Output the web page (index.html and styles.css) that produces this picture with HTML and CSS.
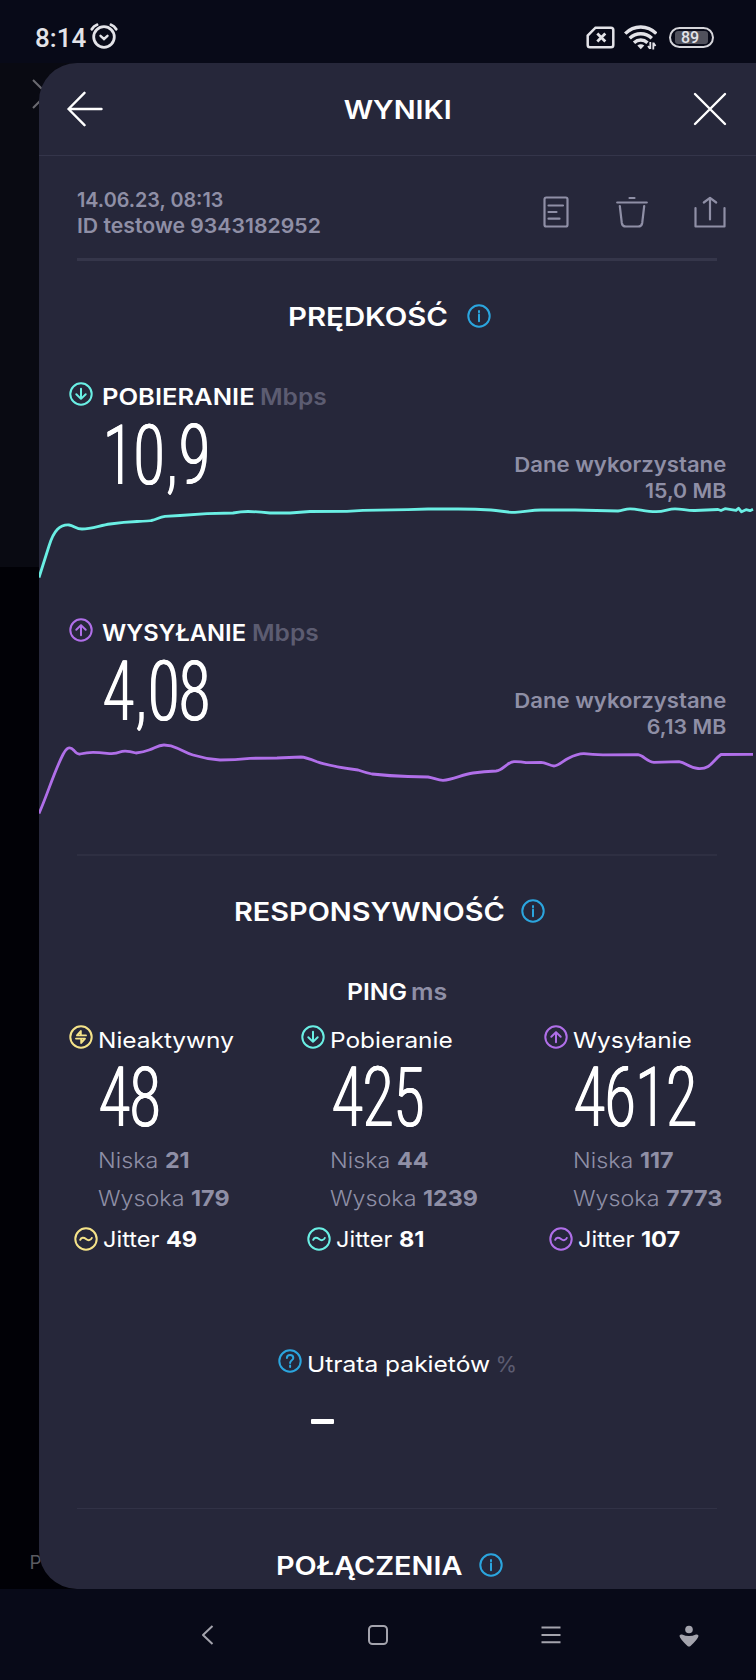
FILE: index.html
```html
<!DOCTYPE html>
<html lang="pl">
<head>
<meta charset="utf-8">
<title>Wyniki</title>
<link rel="stylesheet" href="styles.css">
</head>
<body>
<svg class="defs" width="0" height="0">
  <symbol id="down" viewBox="0 0 24 24"><circle cx="12" cy="12" r="10.700"/><path d="M12 6.800v10M7.300 12.300l4.700 4.600 4.700-4.600"/></symbol>
  <symbol id="up" viewBox="0 0 24 24"><circle cx="12" cy="12" r="10.700"/><path d="M12 17.200v-10M7.300 11.700L12 7.100l4.700 4.600"/></symbol>
  <symbol id="idle" viewBox="0 0 24 24"><circle cx="12" cy="12" r="10.700"/><path d="M17 10.400H8L11.800 6V10M7 13.600h9L12.200 18V14" stroke-width="1.900"/></symbol>
  <symbol id="wave" viewBox="0 0 24 24"><circle cx="12" cy="12" r="10.700"/><path d="M6.200 12.800c1-2.600 3.600-2.600 5.800-.8s4.800 1.500 5.800-1"/></symbol>
  <symbol id="info" viewBox="0 0 24 24"><circle cx="12" cy="12" r="10.700"/><path d="M12 10.500v6.700M12 7v1.300"/></symbol>
  <symbol id="help" viewBox="0 0 24 24"><circle cx="12" cy="12" r="10.700"/><path d="M8.900 9c0-4 6.400-4 6.400 0 0 2.400-3.200 2.200-3.200 5M12.100 16.600v1.400"/></symbol>
</svg>
<div class="phone">
  <header class="status">
    <div class="clock"><span>8:14</span>
      <svg width="28" height="26" viewBox="0 0 28 26" fill="none" stroke="#e3e3e8" stroke-width="2.800" stroke-linecap="round"><circle cx="14" cy="14" r="10.300"/><path d="M10.500 12.800l3.500 3.200 3.500-3.200" stroke-width="2.400"/><path d="M1.800 6.200Q3.600 3 7 1.800M26.200 6.200Q24.400 3 21 1.800"/></svg>
    </div>
    <div class="signals">
      <svg width="29" height="23" viewBox="0 0 29 23" fill="none" stroke="#e3e3e8" stroke-width="2.500"><path d="M9.500 1.700H25Q27.300 1.700 27.300 4V19Q27.300 21.300 25 21.300H4Q1.700 21.300 1.700 19V9.500Z"/><path d="M11.300 7.500l8 8M19.300 7.500l-8 8" stroke-width="2.800"/></svg>
      <svg width="33" height="25" viewBox="0 0 33 25" fill="none" stroke="#e3e3e8" stroke-width="3.400"><path d="M1.200 8.600C10-.3 23.500-.3 32.300 8.600"/><path d="M5.700 13.300c6.300-6 15.800-6 22.100 0"/><path d="M10 17.700c4-3.600 9.500-3.600 13.500 0"/><path d="M13.300 20.600q3.500-2.500 7 0L16.800 24.300Z" fill="#e3e3e8" stroke="none"/><path d="M26.300 17v7M24 21l2 2.800M29.300 24.500v-7M31.500 21l-2-3" stroke-width="1.800"/></svg>
      <span class="battery"><span class="charge">89</span></span>
    </div>
  </header>

  <div class="stage">
    <svg class="ghost-x" width="12" height="30" viewBox="0 0 12 30" stroke="#6a6a70" stroke-width="2"><path d="M1 1l14 14L1 29" fill="none"/></svg>
    <span class="ghost-p">P</span>
    <main class="panel">
      <div class="bar">
        <svg width="36" height="36" viewBox="0 0 36 36" fill="none" stroke="#fff" stroke-width="2.400" stroke-linecap="round" stroke-linejoin="round"><path d="M34.500 18H1.500M17.500 1.800L1.500 18l16 16.200"/></svg>
        <h1>WYNIKI</h1>
        <svg width="34" height="34" viewBox="0 0 34 34" fill="none" stroke="#fff" stroke-width="2.400" stroke-linecap="round"><path d="M2 2l30 30M32 2L2 32"/></svg>
      </div>

      <div class="meta">
        <div class="ident"><div class="date">14.06.23, 08:13</div><div class="test-id">ID testowe 9343182952</div></div>
        <div class="tools">
          <svg width="26" height="32" viewBox="0 0 26 32"><rect x="1.500" y="1.500" width="23" height="29" rx="1.800"/><path d="M5.500 9.500h14.500M5.500 16h8M5.500 22.700h11"/></svg>
          <svg width="32" height="32" viewBox="0 0 32 32"><path d="M1.200 6.500h29.600M13.500 2h5M3.800 10l2 17q.5 3.500 4 3.500h12.400q3.500 0 4-3.500l2-17"/></svg>
          <svg width="32" height="32" viewBox="0 0 32 32"><path d="M1.500 12v18.500h29V12M16 23.500V2M9.800 6.500L16 1.800l6.200 4.700"/></svg>
        </div>
      </div>
      <div class="rule thick"></div>

      <h2 class="head"><span class="w-speed">PRĘDKOŚĆ</span><svg class="ic blue"><use href="#info"/></svg></h2>

      <section class="metric">
        <div class="label"><svg class="ic teal"><use href="#down"/></svg><b class="w-down">POBIERANIE</b><span class="unit">Mbps</span></div>
        <div class="reading"><span class="num">10<i>,</i>9</span><div class="used"><div class="used-name">Dane wykorzystane</div><div class="used-size">15,0 MB</div></div></div>
        <svg class="chart teal" viewBox="39 503 717 83"><path d="M39 577.500L49 546C54 530 60 524.500 69 525C74 525.500 76 529 82 529C91 529 100 525.500 110 524Q124 522 137 521.500T151.500 520.500C157 519.500 159 517 165 516.300L180 515.500 207 513.700 233 513Q241 511.500 248 511.500T270 513H290L310 511.500 347 511.300 363 510.300 408 509.700 428 509H458Q476 509 491 510C501 510.500 505 512.500 515 512.400C525 512.300 530 510 541 510H575L618 511C623 510.500 625 508.800 630 508.800C638 508.800 645 511.700 656 511.700C665 511.700 668 508.800 675 508.800S687 510.700 695 510.500L718 509.500 721 510.500 725 508.700 736 510.400 738.500 508.300 741.500 511.700 746 509.700 750 510.700 753 509.300"/></svg>
      </section>

      <section class="metric">
        <div class="label"><svg class="ic violet"><use href="#up"/></svg><b class="w-up">WYSYŁANIE</b><span class="unit">Mbps</span></div>
        <div class="reading"><span class="num">4<i>,</i>08</span><div class="used"><div class="used-name">Dane wykorzystane</div><div class="used-size">6,13 MB</div></div></div>
        <svg class="chart violet" viewBox="39 739 717 83"><path d="M39 813.500C48 793 54 772 63 754.500C67 747 70 746 74 750.500Q77 754.500 80 754Q87 752.300 93 752.300T107 753.300 120 752 136 753Q144 752 149 750C155 748 158 745 164 745C170 745 174 746.500 178 748.500C184 751 187 753.500 193 755Q206 759 220 760Q235 760 250 758.300L277 758 301 757Q305 757 317 761.700C329 766 343 768 358 770Q365 772.500 372 774Q390 776 408 776.500L428 777C434 778 438 780.300 443 780.300C453 780 462 774.500 473 773Q484 771.500 496 771C503 770.500 507 762 514 761.700Q520 761.500 526 762.700L541 762.300C546 762.500 550 766 554 766C558 766 563 761 568 758.500C573 756 578 753.500 584 753.700Q592 754.700 603 754.800L638 754.700C644 755.500 647 762 654 762.300L679 761.700C686 762.500 689 768 698 768.500C711 769.500 713 760 721 754.500L753 754.300"/></svg>
      </section>
      <div class="rule mid"></div>

      <h2 class="head"><span class="w-resp">RESPONSYWNOŚĆ</span><svg class="ic blue"><use href="#info"/></svg></h2>

      <div class="ping"><b>PING</b><span>ms</span></div>
      <div class="columns">
        <section class="col">
          <div class="name"><svg class="ic yellow"><use href="#idle"/></svg><span>Nieaktywny</span></div>
          <div class="num">48</div>
          <div class="stat">Niska <b>21</b></div>
          <div class="stat">Wysoka <b>179</b></div>
          <div class="jitter"><svg class="ic yellow"><use href="#wave"/></svg><span>Jitter <b>49</b></span></div>
        </section>
        <section class="col">
          <div class="name"><svg class="ic teal"><use href="#down"/></svg><span>Pobieranie</span></div>
          <div class="num">425</div>
          <div class="stat">Niska <b>44</b></div>
          <div class="stat">Wysoka <b>1239</b></div>
          <div class="jitter"><svg class="ic teal"><use href="#wave"/></svg><span>Jitter <b>81</b></span></div>
        </section>
        <section class="col">
          <div class="name"><svg class="ic violet"><use href="#up"/></svg><span>Wysyłanie</span></div>
          <div class="num">4612</div>
          <div class="stat">Niska <b>117</b></div>
          <div class="stat">Wysoka <b>7773</b></div>
          <div class="jitter"><svg class="ic violet"><use href="#wave"/></svg><span>Jitter <b>107</b></span></div>
        </section>
      </div>

      <div class="loss"><svg class="ic blue"><use href="#help"/></svg><span class="loss-name">Utrata pakietów</span><span class="pct">%</span></div>
      <div class="dash"></div>
      <div class="rule thin"></div>
      <h2 class="head"><span class="w-conn">POŁĄCZENIA</span><svg class="ic blue"><use href="#info"/></svg></h2>
    </main>
  </div>

  <nav class="nav">
    <svg width="13" height="22" viewBox="0 0 13 22"><path d="M11.500 2L2 11l9.500 9"/></svg>
    <svg width="22" height="22" viewBox="0 0 22 22"><rect x="2" y="2" width="18" height="18" rx="3.500"/></svg>
    <svg width="20" height="22" viewBox="0 0 20 22"><path d="M.5 3.500h19M.5 11h19M.5 18.300h19"/></svg>
    <svg width="20" height="24" viewBox="0 0 20 24"><g fill="#a4a4ad" stroke="none"><circle cx="10" cy="5.500" r="3.800"/><path d="M.5 12Q.5 10 3 10.500Q10 13.500 17 10.500Q19.500 10 19.500 12Q19 15 11.500 22Q10 23.200 8.500 22Q1 15 .5 12Z"/></g></svg>
  </nav>
</div>
</body>
</html>
```
FILE: styles.css
```css
* { box-sizing: border-box; }
body { margin: 0; background: #000; color: #fff; font-family: Inter, "Noto Sans", sans-serif; }
h1, h2 { margin: 0; }
svg { display: block; flex: none; }
.defs { position: absolute; }
.phone { width: 756px; height: 1680px; display: flex; flex-direction: column; overflow: hidden; }

.status { height: 63px; background: #080a18; display: flex; justify-content: space-between; padding: 23px 42px 0 35px; color: #e3e3e8; }
.clock { display: flex; height: 27px; gap: 4px; font: 500 26px/30px Roboto, sans-serif; }
.signals { display: flex; align-items: center; height: 28px; gap: 9px; }
.battery { width: 45px; height: 21px; border: 2px solid #d5d5da; border-radius: 11px; padding: 2px 4px; margin-left: 3px; }
.charge { display: block; width: 33px; height: 13px; border-radius: 3px; background: #50515c; font: 500 16px/14px Roboto, sans-serif; padding-left: 6px; }

.stage { height: 1526px; position: relative; padding-left: 38.500px; background: linear-gradient(#090a12 0 504px, #010106 504px); }
.ghost-x { position: absolute; left: 32px; top: 16px; }
.ghost-p { position: absolute; left: 29.500px; top: 1487px; color: #5a5a60; font-size: 19px; line-height: 26px; }
.panel { position: relative; height: 1526px; background: #26273a; border-radius: 38px 0 0 38px; overflow: hidden; }

.bar { height: 93px; border-bottom: 1px solid #34354a; display: flex; align-items: center; justify-content: space-between; padding: 0 29px 0 28px; }
.bar h1 { font-size: 26px; font-weight: 600; line-height: 36px; margin: 2px 1px 0 0; transform: scaleX(1.11); }
.meta { height: 102px; padding: 31px 30.500px 0 38px; display: flex; justify-content: space-between; }
.ident, .used { font-size: 20.500px; line-height: 26px; font-weight: 600; color: #8f8fa6; }
.date { transform: scaleX(.965); transform-origin: 0 50%; }
.test-id { transform: scaleX(1.035); transform-origin: 0 50%; }
.tools { display: flex; gap: 46px; padding-top: 9px; }
.tools svg { fill: none; stroke: #8f8fa6; stroke-width: 2.200; stroke-linecap: round; stroke-linejoin: round; }
.tools svg:first-child { margin-right: 1px; }
.rule { margin-left: 38px; width: 640px; background: #35364a; }
.thick { height: 3px; }
.mid { height: 2px; background: #2e2f42; margin-top: 32px; }
.thin { height: 1px; background: #313246; margin-top: 84px; }

.head { height: 40px; margin-top: 35px; padding-right: 15.500px; display: flex; align-items: center; justify-content: center; gap: 17px; font-size: 26px; font-weight: 600; line-height: 41px; }
.head span, .label b, .label .unit, .ping b, .ping span, .name span, .stat, .jitter span, .loss-name { transform-origin: 0 50%; white-space: nowrap; }
.w-speed { transform: scaleX(1.13); margin-right: 20px; }
.w-resp { transform: scaleX(1.11); margin-right: 27px; }
.w-conn { transform: scaleX(1.11); margin-right: 18.500px; }
.ic { width: 24px; height: 24px; fill: none; stroke: currentColor; stroke-width: 2; stroke-linecap: round; stroke-linejoin: round; }
.blue { color: #2ba5de; }
.teal { color: #6aefe4; }
.violet { color: #b06fe9; }
.yellow { color: #f5e389; }

.metric { margin-top: 46px; }
.metric + .metric { margin-top: 32px; }
.label { height: 30px; padding-left: 30px; display: flex; font-size: 22.500px; line-height: 30.500px; }
.label b { margin-left: 9.500px; font-weight: 600; }
.label .w-down { transform: scaleX(1.135); margin-right: 19px; }
.label .w-up { transform: scaleX(1.055); margin-right: 8px; }
.label .unit { margin-left: 5px; color: #5c5c71; font-weight: 600; transform: scaleX(1.09); }
.reading { height: 91px; padding: 0 30px 0 64.500px; display: flex; justify-content: space-between; align-items: flex-end; }
.num { height: 84px; font: 300 84px/87px Roboto, sans-serif; text-shadow: .9px 0 #fff, -.9px 0 #fff; transform: scaleX(.66); transform-origin: 0 50%; white-space: nowrap; }
.num i { font-style: normal; margin: 0 3px; }
.reading .num { align-self: flex-start; }
.used { text-align: right; margin-bottom: -1px; }
.used div { transform-origin: 100% 50%; }
.used-name { transform: scaleX(1.08); }
.used-size { transform: scaleX(1.04); }
.chart { width: 717px; height: 83px; fill: none; stroke: currentColor; stroke-width: 2.800; stroke-linejoin: round; }

.ping { margin-top: 46px; height: 30px; display: flex; justify-content: center; gap: 4.500px; font-size: 22.500px; line-height: 30px; }
.ping b { font-weight: 600; transform: scaleX(1.1); margin-right: 5.500px; }
.ping span { color: #8f8fa6; font-weight: 600; transform: scaleX(1.11); margin-right: 4px; }
.columns { margin-top: 18px; padding-left: 30px; display: grid; grid-template-columns: 232.500px 242.500px 1fr; }
.name { display: flex; gap: 5px; height: 30px; font-size: 22px; line-height: 30px; }
.name span { transform: scaleX(1.11); }
.col .num { width: 150px; margin-left: 30.500px; height: 86px; line-height: 85px; }
.stat { width: 140px; margin-left: 29px; height: 38px; font-size: 22px; font-weight: 350; line-height: 38px; color: #8f8fa6; transform: scaleX(1.06); }
.stat b, .jitter b { font-weight: 700; }
.jitter { margin-top: 5px; padding-left: 5.500px; height: 34px; display: flex; align-items: center; gap: 5px; font-size: 22px; line-height: 34px; }
.jitter span { transform: scaleX(1.07); }
.loss { margin-top: 93px; height: 30px; padding-left: 239px; display: flex; font-size: 22px; line-height: 30px; }
.loss-name { margin: 0 18px 0 5.500px; transform: scaleX(1.115); }
.loss .pct { margin-left: 6.500px; color: #5c5c71; }
.dash { margin: 40px 0 0 272px; width: 23px; height: 5px; border-radius: 1px; background: #fff; }
.thin + .head { margin-top: 36px; }

.nav { height: 91px; background: #080a18; display: flex; align-items: flex-start; padding: 34.500px 0 0 201px; }
.nav svg { fill: none; stroke: #a4a4ad; stroke-width: 2; stroke-linejoin: round; }
.nav svg + svg { margin-left: 153px; }
.nav svg:nth-child(3) { margin-left: 151.500px; }
.nav svg:nth-child(4) { margin-left: 118px; }
```
